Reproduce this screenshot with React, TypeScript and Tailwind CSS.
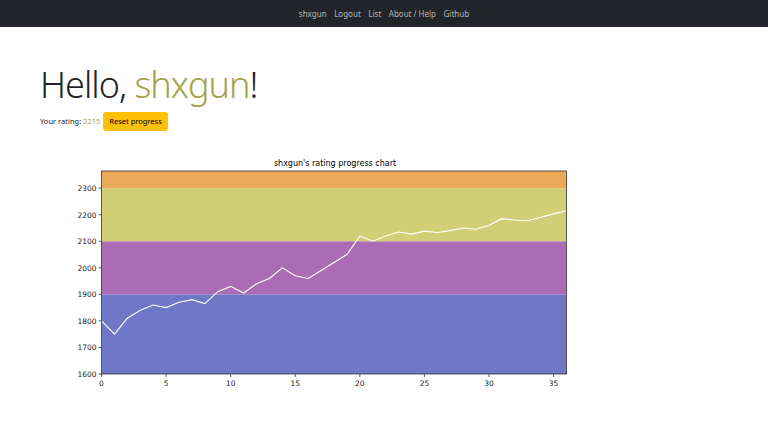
import React from "react";

const data = [
  1800, 1750, 1810, 1840, 1860, 1850, 1870, 1880, 1865, 1910, 1930, 1905, 1940,
  1960, 2000, 1970, 1960, 1990, 2020, 2050, 2120, 2100, 2120, 2135, 2127, 2138,
  2133, 2140, 2150, 2145, 2160, 2185, 2180, 2177, 2190, 2203, 2215,
];

// plot area in svg coords (svg sits at page x=60, y=155)
const X0 = 41.5;
const X1 = 506.5;
const Y0 = 219; // 1600
const YTOP = 16; // top of axes
const XMAX = 36;
const YMIN = 1600;
const PER100 = 26.55;

const sx = (i: number) => X0 + ((X1 - X0) * i) / XMAX;
const sy = (v: number) => Y0 - ((v - YMIN) / 100) * PER100;

function RatingChart() {
  const points = data.map((v, i) => `${sx(i)},${sy(v)}`).join(" ");
  const bands = [
    { from: 1600, to: 1900, color: "#6e78c6" },
    { from: 1900, to: 2100, color: "#aa6db5" },
    { from: 2100, to: 2300, color: "#d2ce76" },
  ];
  return (
    <svg width="520" height="240" viewBox="0 0 520 240" className="block">
      <text
        x={(X0 + X1) / 2 + 1}
        y="11"
        textAnchor="middle"
        fontSize="8"
        fill="#000"
        fontFamily="DejaVu Sans, sans-serif"
      >
        shxgun's rating progress chart
      </text>
      <rect x={X0} y={YTOP} width={X1 - X0} height={sy(2300) - YTOP} fill="#eca95a" />
      {bands.map((b) => (
        <rect
          key={b.from}
          x={X0}
          y={sy(b.to)}
          width={X1 - X0}
          height={sy(b.from) - sy(b.to)}
          fill={b.color}
        />
      ))}
      <polyline points={points} fill="none" stroke="#fff" strokeWidth="1.1" />
      <rect x={X0} y={YTOP} width={X1 - X0} height={Y0 - YTOP} fill="none" stroke="#333" strokeWidth="0.8" />
      {[1600, 1700, 1800, 1900, 2000, 2100, 2200, 2300].map((v) => (
        <g key={v}>
          <line x1={X0 - 3} x2={X0} y1={sy(v)} y2={sy(v)} stroke="#333" strokeWidth="0.8" />
          <text
            x={X0 - 5}
            y={sy(v) + 2.8}
            textAnchor="end"
            fontSize="7.5"
            fill="#222"
            fontFamily="DejaVu Sans, sans-serif"
          >
            {v}
          </text>
        </g>
      ))}
      {[0, 5, 10, 15, 20, 25, 30, 35].map((t) => (
        <g key={t}>
          <line x1={sx(t)} x2={sx(t)} y1={Y0} y2={Y0 + 3} stroke="#333" strokeWidth="0.8" />
          <text
            x={sx(t)}
            y={Y0 + 11.5}
            textAnchor="middle"
            fontSize="7.5"
            fill="#222"
            fontFamily="DejaVu Sans, sans-serif"
          >
            {t}
          </text>
        </g>
      ))}
    </svg>
  );
}

export default function App() {
  return (
    <div className="min-h-screen bg-white font-['Noto_Sans',sans-serif] text-[#212529]">
      {/* navbar */}
      <nav className="flex h-[27px] items-center justify-center gap-[7.5px] bg-[#212529] text-[8px] text-[#b4b6b8]">
        <span>shxgun</span>
        <span>Logout</span>
        <span>List</span>
        <span>About / Help</span>
        <span>Github</span>
      </nav>

      <main className="px-10">
        <h1 className="mt-[36px] text-[36px] font-light leading-[1.2] tracking-[-1px]">
          Hello, <span className="text-[#a5a14b]">shxgun</span>!
        </h1>
        <div className="mt-[6px] flex items-center gap-[3px] text-[7.5px]">
          <span>
            Your rating: <span className="text-[#a5a14b]">2215</span>
          </span>
          <button className="h-[19px] rounded-[3px] bg-[#ffc107] px-[6px] text-[7.5px] text-black">
            Reset progress
          </button>
        </div>

        <div className="ml-[20px] mt-[24px]">
          <RatingChart />
        </div>
      </main>
    </div>
  );
}
